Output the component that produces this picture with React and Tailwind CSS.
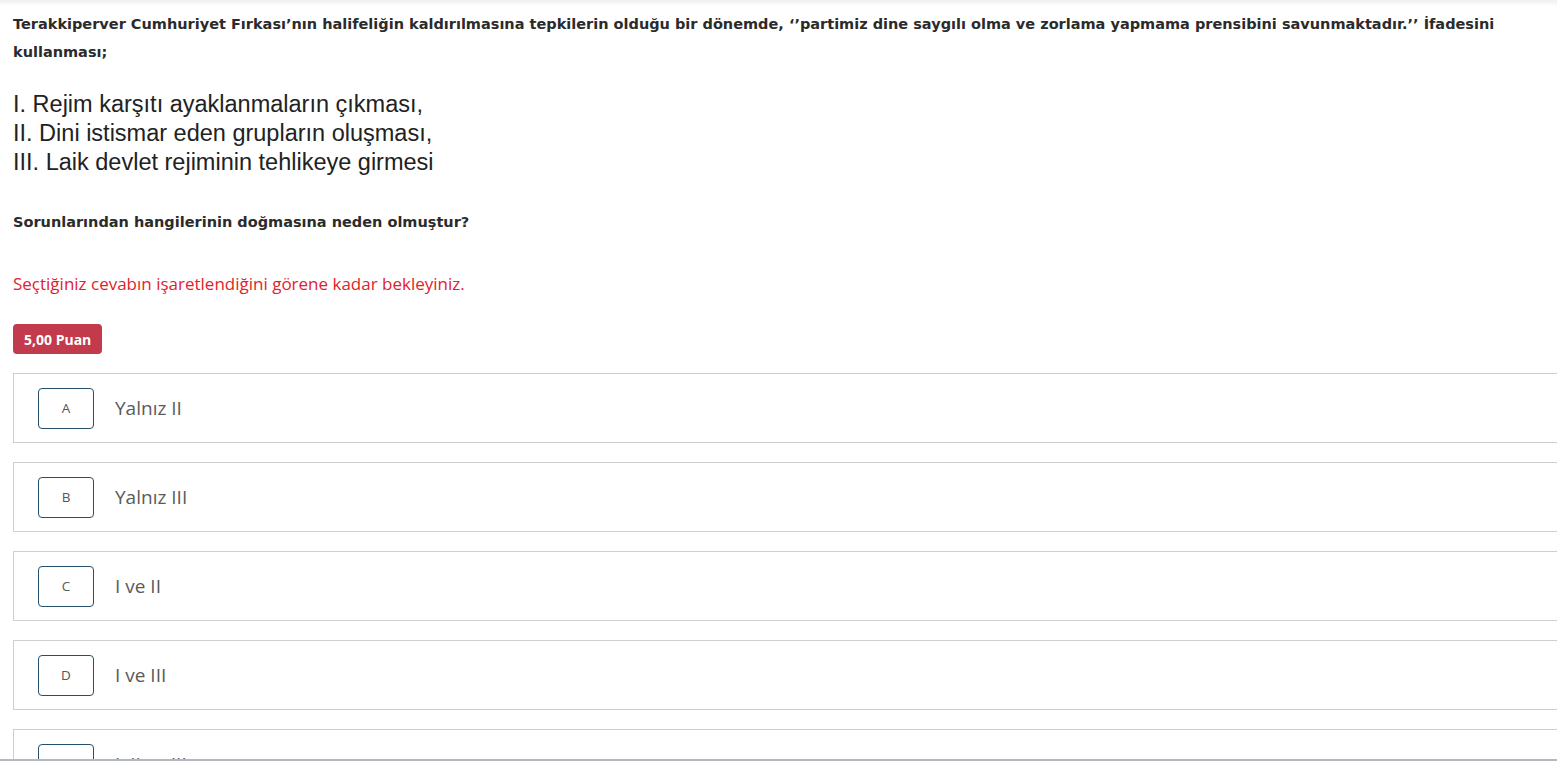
const options = [
  { letter: 'A', text: 'Yalnız II' },
  { letter: 'B', text: 'Yalnız III' },
  { letter: 'C', text: 'I ve II' },
  { letter: 'D', text: 'I ve III' },
  { letter: 'E', text: 'I, II ve III' },
];

const OptionCard = ({ letter, text }) => (
  <div className="flex items-center h-[70px] border border-[#cfcfcf] bg-white pl-6 -mr-6 mb-[19px]">
    <div className="w-14 h-[41px] shrink-0 flex items-center justify-center border border-[#24506d] rounded-[4px] text-[13.5px] text-[#555]">
      {letter}
    </div>
    <span className="ml-[21px] text-[19px] text-[#5a5a5a]">{text}</span>
  </div>
);

export default function App() {
  return (
    <div className="h-[761px] overflow-hidden border-b-2 border-[#b3b8be] bg-white relative">
      <div className="h-[6px] bg-gradient-to-b from-[#efefef] to-white" />
      <div className="pl-[13px] font-['Open_Sans',sans-serif]">
        <p className="mt-[4px] font-['DejaVu_Sans',Verdana,sans-serif] font-bold text-[14.5px] leading-[28px] text-[#2b2b2b] pr-10">
          Terakkiperver Cumhuriyet Fırkası’nın halifeliğin kaldırılmasına tepkilerin olduğu bir dönemde, ‘’partimiz dine saygılı olma ve zorlama yapmama prensibini savunmaktadır.’’ İfadesini kullanması;
        </p>
        <div className="mt-[24px] font-['Liberation_Sans',Arial,sans-serif] text-[23.5px] leading-[29px] text-[#222]">
          <div>I. Rejim karşıtı ayaklanmaların çıkması,</div>
          <div>II. Dini istismar eden grupların oluşması,</div>
          <div>III. Laik devlet rejiminin tehlikeye girmesi</div>
        </div>
        <p className="mt-[31px] font-['DejaVu_Sans',Verdana,sans-serif] font-bold text-[14.5px] leading-[28px] text-[#2b2b2b]">
          Sorunlarından hangilerinin doğmasına neden olmuştur?
        </p>
        <p className="mt-[37px] text-[17px] leading-[22px] text-[#e2222b]">
          Seçtiğiniz cevabın işaretlendiğini görene kadar bekleyiniz.
        </p>
        <div className="mt-[29px] inline-flex items-center h-[30px] px-[11px] rounded-[4px] bg-[#c23a4b] text-white text-[14px] font-bold">
          5,00 Puan
        </div>
        <div className="mt-[19px]">
          {options.map((o) => (
            <OptionCard key={o.letter} {...o} />
          ))}
        </div>
      </div>
    </div>
  );
}
